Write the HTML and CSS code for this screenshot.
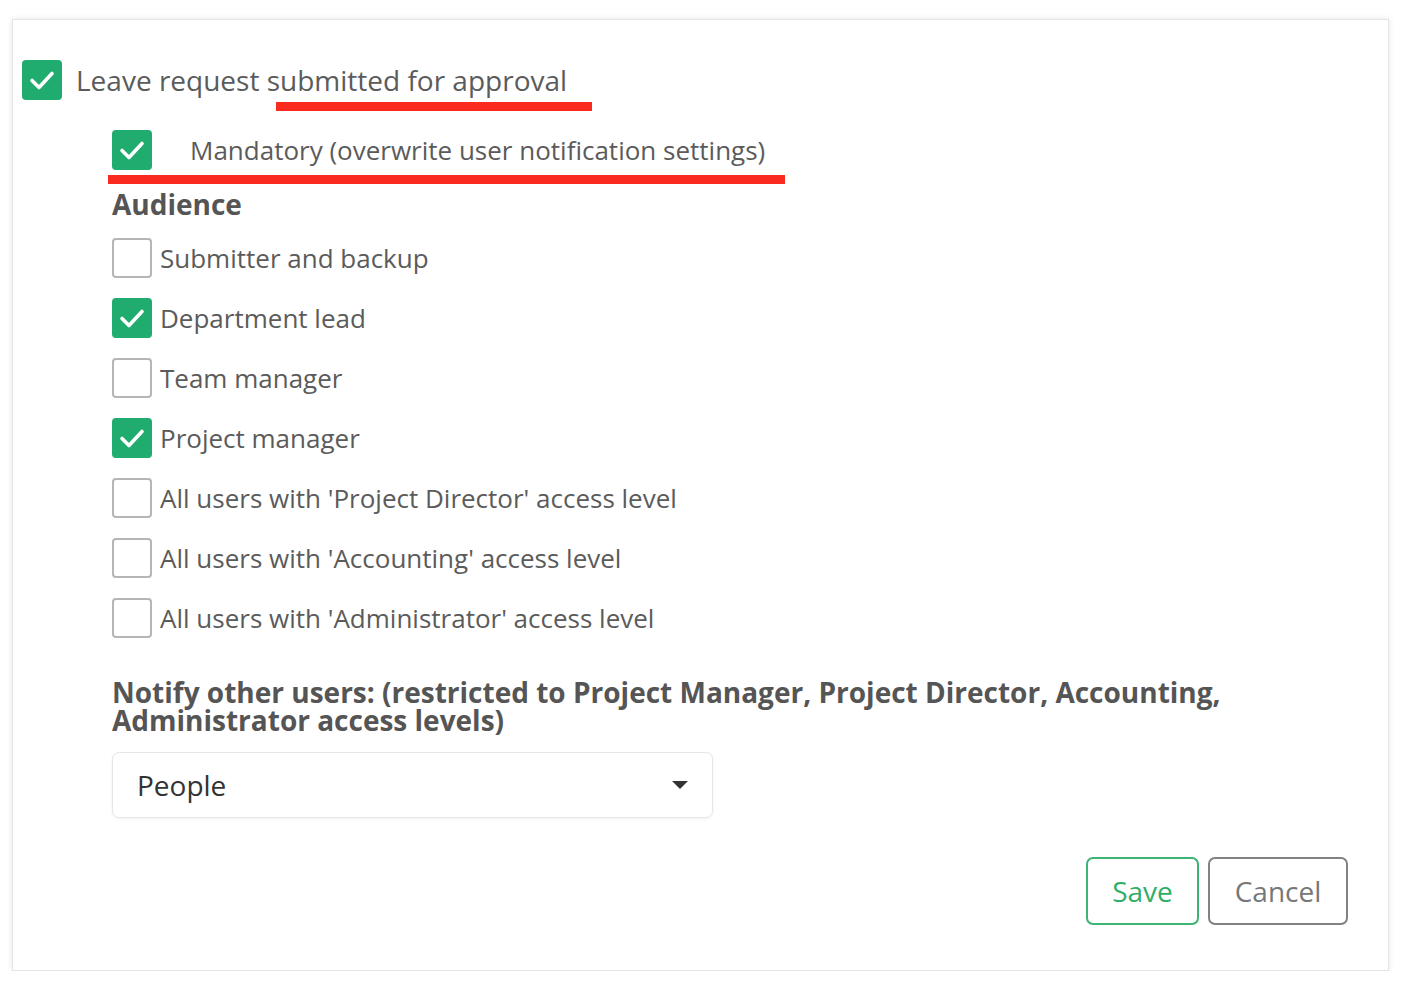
FILE: index.html
```html
<!DOCTYPE html>
<html>
<head>
<meta charset="utf-8">
<link rel="stylesheet" href="styles.css">
</head>
<body>
<div class="card">
  <div class="row top-row">
    <span class="box checked"><svg viewBox="0 0 40 40"><path d="M10 20.5 L17 27.5 L30 13.5"/></svg></span>
    <span class="label big">Leave request submitted for approval</span>
  </div>
  <div class="row mandatory-row">
    <span class="box checked"><svg viewBox="0 0 40 40"><path d="M10 20.5 L17 27.5 L30 13.5"/></svg></span>
    <span class="label mand">Mandatory (overwrite user notification settings)</span>
  </div>
  <div class="section">
    <h3 class="heading">Audience</h3>
    <div class="list">
      <div class="row item"><span class="box"></span><span class="label">Submitter and backup</span></div>
      <div class="row item"><span class="box checked"><svg viewBox="0 0 40 40"><path d="M10 20.5 L17 27.5 L30 13.5"/></svg></span><span class="label">Department lead</span></div>
      <div class="row item"><span class="box"></span><span class="label">Team manager</span></div>
      <div class="row item"><span class="box checked"><svg viewBox="0 0 40 40"><path d="M10 20.5 L17 27.5 L30 13.5"/></svg></span><span class="label">Project manager</span></div>
      <div class="row item"><span class="box"></span><span class="label">All users with 'Project Director' access level</span></div>
      <div class="row item"><span class="box"></span><span class="label">All users with 'Accounting' access level</span></div>
      <div class="row item"><span class="box"></span><span class="label">All users with 'Administrator' access level</span></div>
    </div>
    <h3 class="heading notify">Notify other users: (restricted to Project Manager, Project Director, Accounting, Administrator access levels)</h3>
    <div class="select"><span>People</span><span class="caret"></span></div>
  </div>
  <div class="actions">
    <button class="btn save">Save</button>
    <button class="btn cancel">Cancel</button>
  </div>
  <div class="mark mark1"></div>
  <div class="mark mark2"></div>
</div>
</body>
</html>
```
FILE: styles.css
```css
html, body {
  margin: 0;
  padding: 0;
  background: #ffffff;
}
body {
  font-family: "Open Sans", "Liberation Sans", sans-serif;
  color: #5b5b5b;
}
.card {
  position: relative;
  box-sizing: border-box;
  margin: 19px 0 0 12px;
  width: 1377px;
  height: 952px;
  border: 1px solid #e4e4e4;
  box-shadow: 0 0 6px rgba(0, 0, 0, 0.10);
  padding: 40px 40px 0 9px;
}
.row {
  display: flex;
  align-items: center;
}
.box {
  flex: none;
  box-sizing: border-box;
  width: 40px;
  height: 40px;
  border: 2px solid #b5b5b5;
  border-radius: 4px;
  background: #fff;
  display: flex;
}
.box.checked {
  border: none;
  background: #1fac6e;
}
.box svg {
  width: 40px;
  height: 40px;
}
.box svg path {
  fill: none;
  stroke: #fff;
  stroke-width: 3.6;
  stroke-linecap: round;
  stroke-linejoin: round;
}
.label {
  font-size: 26px;
  line-height: 34px;
  margin-left: 8px;
  white-space: nowrap;
}
.top-row .label {
  margin-left: 14px;
  font-size: 28px;
}
.mandatory-row {
  margin: 30px 0 0 90px;
}
.mandatory-row .label {
  margin-left: 38px;
}
.section {
  margin-left: 90px;
}
.heading {
  margin: 0;
  font-size: 28px;
  font-weight: 700;
  color: #555555;
  line-height: 28px;
}
.section > .heading:first-child {
  margin-top: 20px;
}
.list {
  margin-top: 20px;
  display: flex;
  flex-direction: column;
  gap: 20px;
}
.notify {
  margin-top: 40px;
  width: 1200px;
}
.select {
  box-sizing: border-box;
  margin-top: 18px;
  width: 601px;
  height: 66px;
  border: 1px solid #e6e6e6;
  border-radius: 7px;
  box-shadow: 0 1px 3px rgba(0, 0, 0, 0.06);
  display: flex;
  align-items: center;
  justify-content: space-between;
  padding: 0 24px 0 24px;
  font-size: 28px;
  color: #333333;
}
.caret {
  width: 0;
  height: 0;
  border-left: 8px solid transparent;
  border-right: 8px solid transparent;
  border-top: 8px solid #333;
}
.actions {
  display: flex;
  justify-content: flex-end;
  gap: 9px;
  margin-top: 39px;
}
.btn {
  box-sizing: border-box;
  height: 68px;
  background: #fff;
  border-radius: 7px;
  font-family: "Open Sans", "Liberation Sans", sans-serif;
  font-size: 28px;
  padding: 0;
}
.save {
  width: 113px;
  border: 2px solid #3fb374;
  color: #2fae67;
}
.cancel {
  width: 140px;
  border: 2px solid #828282;
  color: #777777;
}
.mark {
  position: absolute;
  height: 9px;
  background: #fa2a1e;
}
.mark1 {
  left: 263px;
  top: 82px;
  width: 316px;
}
.mark2 {
  left: 95px;
  top: 155px;
  width: 677px;
}
```
